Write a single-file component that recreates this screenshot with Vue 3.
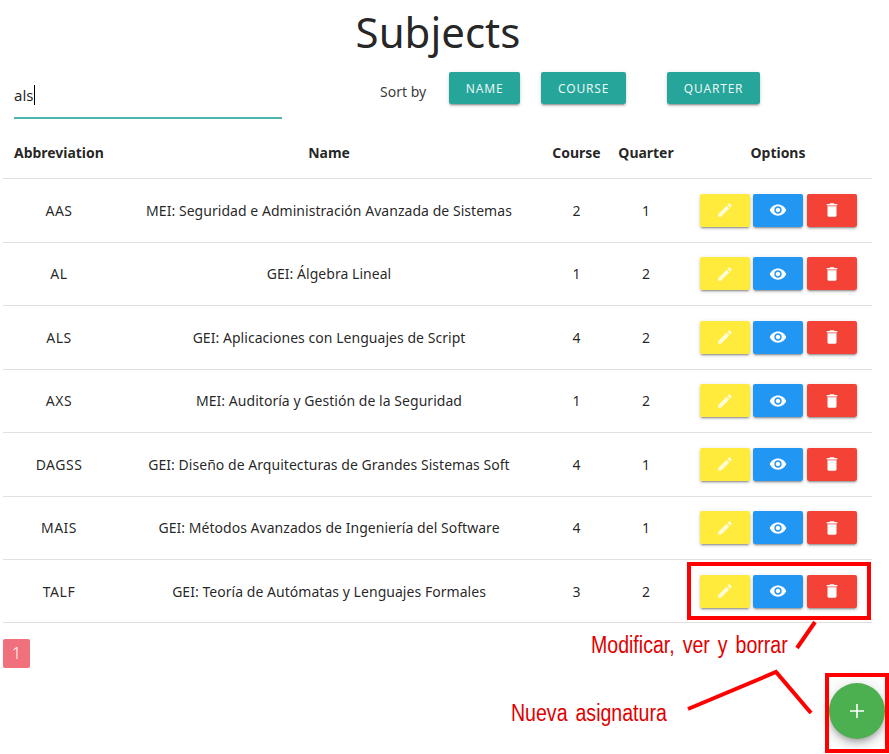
<template>
  <div class="page">
    <h1 class="title">Subjects</h1>

    <div class="toolbar">
      <div class="search"><span class="search-text">als</span><span class="caret"></span></div>
      <span class="sort-label">Sort by</span>
      <button class="sort-btn name">NAME</button>
      <button class="sort-btn course">COURSE</button>
      <button class="sort-btn quarter">QUARTER</button>
    </div>

    <table class="subjects">
      <colgroup>
        <col class="c-abbr" />
        <col class="c-name" />
        <col class="c-course" />
        <col class="c-quarter" />
        <col class="c-options" />
      </colgroup>
      <thead>
        <tr>
          <th class="abbr-head">Abbreviation</th>
          <th>Name</th>
          <th>Course</th>
          <th>Quarter</th>
          <th class="options-head">Options</th>
        </tr>
      </thead>
      <tbody>
        <tr v-for="s in subjects" :key="s.abbr">
          <td class="abbr">{{ s.abbr }}</td>
          <td>{{ s.name }}</td>
          <td>{{ s.course }}</td>
          <td>{{ s.quarter }}</td>
          <td>
            <div class="actions">
              <button class="act yellow">
                <svg viewBox="0 0 24 24"><path d="M3 17.25V21h3.75L17.81 9.94l-3.75-3.75L3 17.25zM20.71 7.04c.39-.39.39-1.02 0-1.41l-2.34-2.34c-.39-.39-1.02-.39-1.41 0l-1.83 1.83 3.75 3.75 1.83-1.83z" /></svg>
              </button>
              <button class="act blue">
                <svg viewBox="0 0 24 24"><path d="M12 4.5C7 4.5 2.73 7.61 1 12c1.73 4.39 6 7.5 11 7.5s9.27-3.11 11-7.5c-1.73-4.39-6-7.5-11-7.5zM12 17c-2.76 0-5-2.24-5-5s2.24-5 5-5 5 2.24 5 5-2.24 5-5 5zm0-8c-1.66 0-3 1.34-3 3s1.34 3 3 3 3-1.34 3-3-1.34-3-3-3z" /></svg>
              </button>
              <button class="act red">
                <svg viewBox="0 0 24 24"><path d="M6 19c0 1.1.9 2 2 2h8c1.1 0 2-.9 2-2V7H6v12zM19 4h-3.5l-1-1h-5l-1 1H5v2h14V4z" /></svg>
              </button>
            </div>
          </td>
        </tr>
      </tbody>
    </table>

    <div class="pagination"><span class="page-num">1</span></div>

    <button class="fab">
      <svg viewBox="0 0 24 24"><path d="M19 12.8h-6.2V19h-1.6v-6.2H5v-1.6h6.2V5h1.6v6.2H19v1.6z" /></svg>
    </button>

    <!-- anotaciones en rojo sobre la captura -->
    <div class="box box-actions"></div>
    <div class="box box-fab"></div>
    <svg class="lines" width="889" height="754">
      <path d="M815 622 L797 648" />
      <path d="M688 709 L776 672 L811 713" />
    </svg>
    <span class="note note-edit">Modificar, ver y borrar</span>
    <span class="note note-new">Nueva asignatura</span>
  </div>
</template>

<script setup>
const subjects = [
  { abbr: 'AAS', name: 'MEI: Seguridad e Administración Avanzada de Sistemas', course: 2, quarter: 1 },
  { abbr: 'AL', name: 'GEI: Álgebra Lineal', course: 1, quarter: 2 },
  { abbr: 'ALS', name: 'GEI: Aplicaciones con Lenguajes de Script', course: 4, quarter: 2 },
  { abbr: 'AXS', name: 'MEI: Auditoría y Gestión de la Seguridad', course: 1, quarter: 2 },
  { abbr: 'DAGSS', name: 'GEI: Diseño de Arquitecturas de Grandes Sistemas Soft', course: 4, quarter: 1 },
  { abbr: 'MAIS', name: 'GEI: Métodos Avanzados de Ingeniería del Software', course: 4, quarter: 1 },
  { abbr: 'TALF', name: 'GEI: Teoría de Autómatas y Lenguajes Formales', course: 3, quarter: 2 }
]
</script>

<style>
html,
body {
  margin: 0;
  background: #fff;
  overflow: hidden;
}
</style>

<style scoped>
.page {
  position: relative;
  width: 889px;
  height: 754px;
  overflow: hidden;
  padding-left: 3px;
  box-sizing: border-box;
  font-family: "Noto Sans", "Open Sans", sans-serif;
  color: rgba(0, 0, 0, 0.87);
  font-size: 14px;
}

.title {
  width: 870px;
  margin: 0;
  padding-top: 3px;
  height: 57px;
  font-size: 42px;
  line-height: 57px;
  font-weight: 400;
  text-align: center;
}

.toolbar {
  display: flex;
  align-items: flex-start;
  margin-top: 12px;
  height: 47px;
}

.search {
  width: 268px;
  height: 45px;
  margin-left: 11px;
  border-bottom: 2px solid #4db6ac;
  display: flex;
  align-items: center;
  font-size: 15px;
  box-sizing: content-box;
}

.search-text {
  line-height: 44px;
}

.caret {
  width: 1px;
  height: 20px;
  margin-left: 1px;
  background: #000;
}

.sort-label {
  margin-left: 98px;
  line-height: 40px;
  font-size: 14px;
  color: rgba(0, 0, 0, 0.8);
}

.sort-btn {
  height: 32px;
  border: none;
  border-radius: 2px;
  background: #26a69a;
  color: rgba(255, 255, 255, 0.92);
  font: inherit;
  font-size: 12px;
  letter-spacing: 0.8px;
  box-shadow: 0 3px 1px -2px rgba(0, 0, 0, 0.2), 0 2px 2px 0 rgba(0, 0, 0, 0.14), 0 1px 5px 0 rgba(0, 0, 0, 0.12);
  padding: 0;
}

.sort-btn.name {
  width: 71px;
  margin-left: 23px;
}

.sort-btn.course {
  width: 85px;
  margin-left: 21px;
}

.sort-btn.quarter {
  width: 93px;
  margin-left: 41px;
}

.subjects {
  width: 869px;
  margin-top: 12px;
  border-collapse: collapse;
  table-layout: fixed;
}

.c-abbr { width: 112px; }
.c-name { width: 428px; }
.c-course { width: 67px; }
.c-quarter { width: 72px; }
.c-options { width: 190px; }

th {
  height: 43.2px;
  padding: 0 0 4px;
  font-weight: 700;
  font-size: 14px;
  letter-spacing: -0.03px;
  text-align: center;
  border-bottom: 1px solid #e0e0e0;
}

th.abbr-head {
  text-align: left;
  padding-left: 11px;
}

th.options-head {
  padding-left: 2px;
}

td {
  height: 62.47px;
  padding: 0;
  text-align: center;
  font-size: 14px;
  letter-spacing: 0.04px;
  border-bottom: 1px solid #e0e0e0;
}

td.abbr {
  letter-spacing: 0.5px;
}

.actions {
  display: flex;
  justify-content: flex-start;
  padding-left: 18px;
}

.act {
  width: 50px;
  height: 33px;
  padding: 0;
  border: none;
  border-radius: 2px;
  display: flex;
  align-items: center;
  justify-content: center;
  box-shadow: 0 3px 1px -2px rgba(0, 0, 0, 0.2), 0 2px 2px 0 rgba(0, 0, 0, 0.14), 0 1px 5px 0 rgba(0, 0, 0, 0.12);
}

.act svg {
  width: 18px;
  height: 18px;
  fill: #fff;
}

.yellow { background: #ffeb3b; }
.blue { background: #2196f3; margin-left: 3px; }
.red { background: #f44336; margin-left: 4px; }

.yellow svg {
  opacity: 0.8;
}

.pagination {
  margin-top: 16px;
}

.page-num {
  display: block;
  width: 27px;
  height: 29px;
  border-radius: 2px;
  background: #f0707c;
  color: #fff;
  font-size: 16px;
  font-weight: 300;
  line-height: 29px;
  text-align: center;
}

.fab {
  position: absolute;
  left: 829px;
  top: 683px;
  width: 56px;
  height: 56px;
  padding: 0;
  border: none;
  border-radius: 50%;
  background: #4caf50;
  display: flex;
  align-items: center;
  justify-content: center;
  box-shadow: 0 3px 5px -1px rgba(0, 0, 0, 0.2), 0 6px 10px 0 rgba(0, 0, 0, 0.14), 0 1px 18px 0 rgba(0, 0, 0, 0.12);
}

.fab svg {
  width: 24px;
  height: 24px;
  fill: #fff;
}

.box {
  position: absolute;
  box-sizing: border-box;
  border: 4px solid #f00;
}

.box-actions {
  left: 687px;
  top: 562px;
  width: 184px;
  height: 58px;
}

.box-fab {
  left: 825px;
  top: 673px;
  width: 64px;
  height: 80px;
}

.lines {
  position: absolute;
  left: 0;
  top: 0;
  pointer-events: none;
}

.lines path {
  fill: none;
  stroke: #f00;
  stroke-width: 4;
}

.note {
  position: absolute;
  font-family: "Liberation Sans", Arial, sans-serif;
  font-size: 23px;
  word-spacing: 3px;
  color: #e00000;
  white-space: nowrap;
  transform: scaleX(0.85);
  transform-origin: left top;
}

.note-edit {
  left: 591px;
  top: 632px;
}

.note-new {
  left: 511px;
  top: 700px;
}
</style>
